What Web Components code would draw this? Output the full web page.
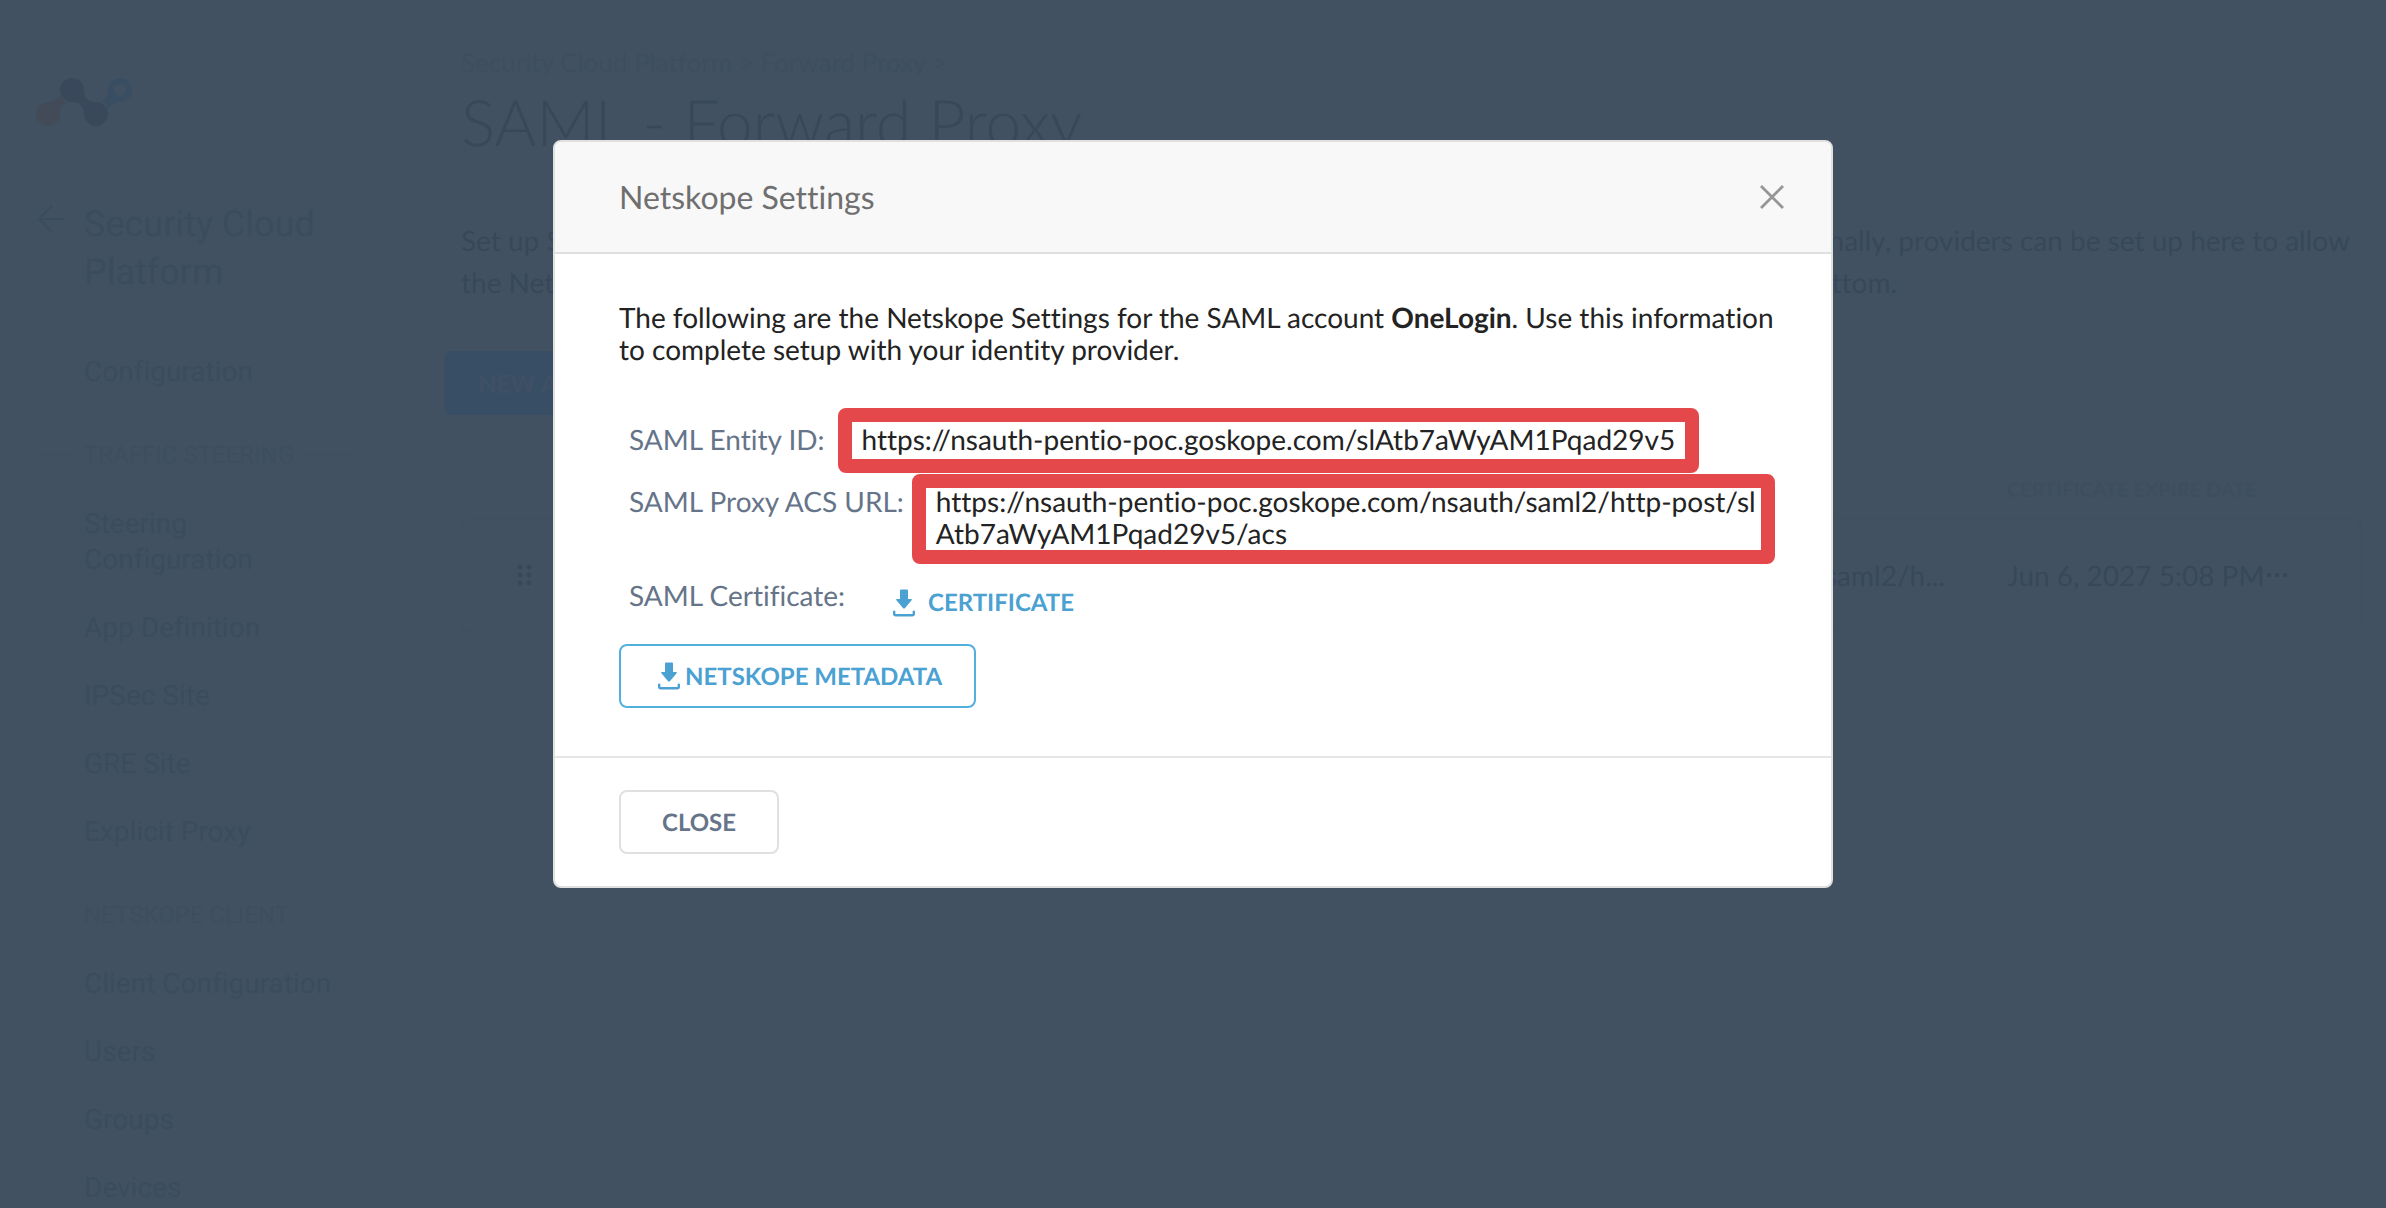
<!DOCTYPE html>
<html lang="en">
<head>
<meta charset="utf-8">
<meta name="viewport" content="width=device-width, initial-scale=1">
<title>SAML - Forward Proxy</title>
<style>
  :root {
    --page: #415162;
    --faint: #3e4e60;
    --nav: #3c4c5f;
    --ink: #384859;
    --line: #3f4f60;
    --muted: #667489;
    --blue: #4aa1d2;
    --red: #e5484a;
  }

  body {
    margin: 0;
    background: var(--page);
    font-family: Lato, "Liberation Sans", sans-serif;
    font-size: 28px;
    font-variant-ligatures: none;
    text-rendering: geometricPrecision;
  }
</style>
</head>
<body>
<app-shell>
  <side-nav slot="nav"></side-nav>
  <proxy-page></proxy-page>
  <modal-dialog slot="modal" heading="Netskope Settings">
    <saml-settings></saml-settings>
    <ui-button slot="footer">CLOSE</ui-button>
  </modal-dialog>
</app-shell>

<script>
class AppShell extends HTMLElement {
  constructor() {
    super();
    this.attachShadow({ mode: "open" }).innerHTML = `
      <style>
        :host {
          display: grid;
          grid-template-columns: 395px 1fr;
          height: 100vh;
          overflow: hidden;
        }

        .nav {
          box-sizing: border-box;
          height: 100vh;
          overflow: hidden;
          border-right: 1px solid var(--line);
        }

        .overlay {
          position: fixed;
          inset: 0;
          display: flex;
          justify-content: center;
          align-items: flex-start;
          padding-top: 140px;
        }
      </style>
      <div class="nav"><slot name="nav"></slot></div>
      <main><slot></slot></main>
      <div class="overlay"><slot name="modal"></slot></div>`;
  }
}

class SideNav extends HTMLElement {
  constructor() {
    super();
    this.attachShadow({ mode: "open" }).innerHTML = `
      <style>
        :host {
          display: block;
          padding: 78px 36px 0;
          font-family: Roboto, "Liberation Sans", sans-serif;
          line-height: 36px;
          color: var(--nav);
        }

        svg {
          display: block;
          flex: none;
        }

        .back {
          display: flex;
          gap: 19px;
          margin-top: 74px;
          font-size: 36px;
          line-height: 48px;
          color: inherit;
          text-decoration: none;
        }

        .back svg {
          margin: 5px 0 0 1px;
        }

        ul {
          list-style: none;
          margin: 0;
          padding: 0 20px 0 48px;
          display: flex;
          flex-direction: column;
          gap: 32px;
        }

        .first {
          margin-top: 58px;
        }

        li a {
          display: inline-block;
          color: inherit;
          text-decoration: none;
        }

        .narrow {
          max-width: 200px;
        }
      </style>
      <nav aria-label="Main">
        <svg width="96" height="48" viewBox="0 0 96 48">
          <path fill="#434b59" d="M12 24Q20 24 24 17Q26 22 31 24.5Q24 27 24 36A12 12 0 1 1 12 24z"/>
          <path fill="#39485b" d="M36 0A12 12 0 0 1 48 12Q48 24 60 24A12 12 0 1 1 48 36Q48 24 36 24A12 12 0 1 1 36 0z"/>
          <path fill="#394e63" fill-rule="evenodd" d="M84 24Q76 25 72 31Q70 25 66 23Q72 20 72 12A12 12 0 1 1 84 24zM84 6A6 6 0 1 0 84 18A6 6 0 1 0 84 6z"/>
        </svg>
        <a class="back" href="#">
          <svg width="28" height="28" viewBox="0 0 28 28" fill="none" stroke="currentColor" stroke-width="2">
            <path d="M28 14H3M15 1L2 14L15 27"/>
          </svg>
          <span>Security Cloud Platform</span>
        </a>
        <ul class="first">
          <li><a href="#">Configuration</a></li>
        </ul>
        <nav-caption>TRAFFIC STEERING</nav-caption>
        <ul>
          <li><a class="narrow" href="#">Steering Configuration</a></li>
          <li><a href="#">App Definition</a></li>
          <li><a href="#">IPSec Site</a></li>
          <li><a href="#">GRE Site</a></li>
          <li><a href="#">Explicit Proxy</a></li>
        </ul>
        <nav-caption>NETSKOPE CLIENT</nav-caption>
        <ul>
          <li><a href="#">Client Configuration</a></li>
          <li><a href="#">Users</a></li>
          <li><a href="#">Groups</a></li>
          <li><a href="#">Devices</a></li>
        </ul>
      </nav>`;
  }
}

class NavCaption extends HTMLElement {
  constructor() {
    super();
    this.attachShadow({ mode: "open" }).innerHTML = `
      <style>
        :host {
          display: flex;
          align-items: center;
          gap: 10px;
          margin: 47px 0 33px;
          font-size: 24px;
          color: var(--faint);
        }

        :host::before,
        :host::after {
          content: "";
          width: 38px;
          border-top: 1px solid var(--line);
        }

        :host::after {
          flex: 1;
        }
      </style>
      <slot></slot>`;
  }
}

class ProxyPage extends HTMLElement {
  constructor() {
    super();
    this.attachShadow({ mode: "open" }).innerHTML = `
      <style>
        :host {
          display: block;
          padding: 44px 24px 0 66px;
          color: var(--ink);
        }

        .crumbs {
          font-size: 26px;
          line-height: 36px;
          color: var(--faint);
        }

        .crumbs a {
          color: inherit;
          text-decoration: none;
        }

        h1 {
          margin: 4px 0 0;
          font-size: 64px;
          line-height: 76px;
          font-weight: 300;
        }

        .intro {
          display: flex;
          justify-content: space-between;
          margin: 59px 12px 0 0;
          line-height: 42px;
        }

        p {
          margin: 0;
        }

        .new {
          height: 64px;
          margin: 48px 0 0 -17px;
          padding: 0 34px;
          border: 0;
          border-radius: 8px;
          background: #384e65;
          color: #405064;
          font: bold 24px Lato, sans-serif;
        }

        table {
          width: 100%;
          margin-top: 60px;
          table-layout: fixed;
          border-collapse: separate;
          border-spacing: 0;
          text-align: left;
        }

        th {
          height: 44px;
          padding: 0;
          font-size: 20px;
          line-height: 30px;
          vertical-align: top;
          white-space: nowrap;
          color: var(--faint);
        }

        td {
          height: 110px;
          padding: 0;
          white-space: nowrap;
          border: solid var(--line);
          border-width: 1px 0;
        }

        td:first-child {
          border-left-width: 1px;
          border-radius: 8px 0 0 8px;
        }

        td:last-child {
          border-right-width: 1px;
          border-radius: 0 8px 8px 0;
        }

        .handle {
          width: 30%;
        }

        .date {
          width: 258px;
        }

        .more {
          width: 97px;
        }

        .url {
          padding-right: 62px;
          text-align: right;
        }

        .icon {
          display: flex;
          padding: 0;
          border: 0;
          background: none;
          color: inherit;
        }

        .grip {
          margin-left: 55px;
        }
      </style>
      <div class="crumbs"><a href="#">Security Cloud Platform</a> &gt; <a href="#">Forward Proxy</a> &gt;</div>
      <h1>SAML - Forward Proxy</h1>
      <div class="intro">
        <p>Set up SAML<br>the Netskope</p>
        <p>Additionally, providers can be set up here to allow<br>near bottom.</p>
      </div>
      <button class="new" type="button">NEW ACCOUNT</button>
      <table>
        <thead>
          <tr>
            <th class="handle"></th>
            <th></th>
            <th class="date">CERTIFICATE EXPIRE DATE</th>
            <th class="more"></th>
          </tr>
        </thead>
        <tbody>
          <tr>
            <td>
              <button class="icon grip" type="button" aria-label="Reorder">
                <svg width="16" height="24" viewBox="0 0 16 24" fill="currentColor">
                  <circle cx="3" cy="4" r="2.4"/><circle cx="12" cy="4" r="2.4"/>
                  <circle cx="3" cy="12" r="2.4"/><circle cx="12" cy="12" r="2.4"/>
                  <circle cx="3" cy="20" r="2.4"/><circle cx="12" cy="20" r="2.4"/>
                </svg>
              </button>
            </td>
            <td class="url">saml2/h...</td>
            <td>Jun 6, 2027 5:08 PM</td>
            <td>
              <button class="icon" type="button" aria-label="More">
                <svg width="24" height="8" viewBox="0 0 24 8" fill="currentColor">
                  <circle cx="4" cy="4" r="2.2"/><circle cx="12" cy="4" r="2.2"/><circle cx="20" cy="4" r="2.2"/>
                </svg>
              </button>
            </td>
          </tr>
        </tbody>
      </table>`;
  }
}

class ModalDialog extends HTMLElement {
  constructor() {
    super();
    this.attachShadow({ mode: "open" });
  }

  connectedCallback() {
    this.shadowRoot.innerHTML = `
      <style>
        :host {
          display: block;
          box-sizing: border-box;
          width: 100%;
          max-width: 1280px;
          border: 2px solid #e0e0e0;
          border-radius: 8px;
          overflow: hidden;
          background: #fff;
          color: #232323;
        }

        header {
          display: flex;
          align-items: center;
          justify-content: space-between;
          padding: 36px 46px 36px 64px;
          border-bottom: 2px solid #e0e0e0;
          background: #f8f8f8;
        }

        h2 {
          margin: 0;
          font-size: 32px;
          line-height: 38px;
          font-weight: 400;
          color: #6f6f6f;
        }

        .x {
          display: flex;
          padding: 0;
          border: 0;
          background: none;
          color: #969696;
        }

        .body {
          padding: 47px 46px 48px 64px;
        }

        footer {
          padding: 32px 64px;
          border-top: 2px solid #e6e6e6;
        }
      </style>
      <section role="dialog" aria-labelledby="heading">
        <header>
          <h2 id="heading">${this.getAttribute("heading")}</h2>
          <button class="x" type="button" aria-label="Close">
            <svg width="26" height="26" viewBox="0 0 26 26" fill="none" stroke="currentColor" stroke-width="2.8">
              <path d="M2 2L24 24M24 2L2 24"/>
            </svg>
          </button>
        </header>
        <div class="body"><slot></slot></div>
        <footer><slot name="footer"></slot></footer>
      </section>`;
  }
}

class SamlSettings extends HTMLElement {
  constructor() {
    super();
    this.attachShadow({ mode: "open" }).innerHTML = `
      <style>
        :host {
          display: block;
          line-height: 32px;
        }

        p {
          margin: 0;
        }

        .fields {
          display: flex;
          flex-direction: column;
          gap: 30px;
          margin: 58px 0 25px;
          padding: 0 18px 0 10px;
        }
      </style>
      <p>The following are the Netskope Settings for the SAML account <b>OneLogin</b>. Use this information to complete setup with your identity provider.</p>
      <div class="fields">
        <field-row label="SAML Entity ID:"><marked-value>https://nsauth-pentio-poc.goskope.com/slAtb7aWyAM1Pqad29v5</marked-value></field-row>
        <field-row label="SAML Proxy ACS URL:"><marked-value class="tall">https://nsauth-pentio-poc.goskope.com/nsauth/saml2/http-post/slAtb7aWyAM1Pqad29v5/acs</marked-value></field-row>
        <field-row label="SAML Certificate:"><download-link>CERTIFICATE</download-link></field-row>
      </div>
      <ui-button primary><download-icon></download-icon>NETSKOPE METADATA</ui-button>`;
  }
}

class FieldRow extends HTMLElement {
  constructor() {
    super();
    this.attachShadow({ mode: "open" });
  }

  connectedCallback() {
    this.shadowRoot.innerHTML = `
      <style>
        :host {
          display: flex;
          align-items: flex-start;
        }

        span {
          flex: none;
          color: var(--muted);
        }
      </style>
      <span>${this.getAttribute("label")}</span>
      <slot></slot>`;
  }
}

// value with a thick red frame drawn over the space round it
class MarkedValue extends HTMLElement {
  constructor() {
    super();
    this.attachShadow({ mode: "open" }).innerHTML = `
      <style>
        :host {
          position: relative;
          display: block;
          margin-left: 37px;
          word-break: break-all;
        }

        :host::before {
          content: "";
          position: absolute;
          inset: -15px -24px -18px;
          border: 14px solid var(--red);
          border-radius: 8px;
        }

        :host(.tall) {
          margin-left: 32px;
        }

        :host(.tall)::before {
          inset: -11px -8px -15px -24px;
        }
      </style>
      <slot></slot>`;
  }
}

class DownloadIcon extends HTMLElement {
  constructor() {
    super();
    this.attachShadow({ mode: "open" }).innerHTML = `
      <style>
        :host {
          display: inline-flex;
          color: var(--blue);
        }
      </style>
      <svg width="22" height="28" viewBox="0 0 22 28">
        <path fill="currentColor" d="M8 .5h6q1 0 1 1V10h3q1.5 0 .6 1.3l-6.5 7.7q-1.1 1.2-2.2 0l-6.5-7.7Q2.5 10 4 10H7V1.5q0-1 1-1z"/>
        <path fill="none" stroke="currentColor" stroke-width="2.4" stroke-linecap="round" stroke-linejoin="round" d="M1.2 22.8v2q0 1.5 1.5 1.5h16.6q1.5 0 1.5-1.5v-2"/>
      </svg>`;
  }
}

class DownloadLink extends HTMLElement {
  constructor() {
    super();
    this.attachShadow({ mode: "open" }).innerHTML = `
      <style>
        :host {
          display: block;
          margin: 8px 0 0 48px;
        }

        a {
          display: flex;
          align-items: center;
          gap: 13px;
          font-size: 24px;
          font-weight: bold;
          color: var(--blue);
          text-decoration: none;
        }
      </style>
      <a href="#"><download-icon></download-icon><slot></slot></a>`;
  }
}

class UiButton extends HTMLElement {
  constructor() {
    super();
    this.attachShadow({ mode: "open" }).innerHTML = `
      <style>
        :host {
          display: flex;
        }

        button {
          display: flex;
          align-items: center;
          gap: 5px;
          height: 64px;
          padding: 0 41px;
          border: 2px solid #e0e0e0;
          border-radius: 8px;
          background: #fff;
          color: var(--muted);
          font: bold 24px Lato, sans-serif;
          text-rendering: inherit;
        }

        :host([primary]) button {
          padding: 0 32px 0 37px;
          border-color: #52b1dc;
          color: var(--blue);
        }
      </style>
      <button type="button"><slot></slot></button>`;
  }
}

customElements.define("app-shell", AppShell);
customElements.define("side-nav", SideNav);
customElements.define("nav-caption", NavCaption);
customElements.define("proxy-page", ProxyPage);
customElements.define("modal-dialog", ModalDialog);
customElements.define("saml-settings", SamlSettings);
customElements.define("field-row", FieldRow);
customElements.define("marked-value", MarkedValue);
customElements.define("download-icon", DownloadIcon);
customElements.define("download-link", DownloadLink);
customElements.define("ui-button", UiButton);
</script>
</body>
</html>
